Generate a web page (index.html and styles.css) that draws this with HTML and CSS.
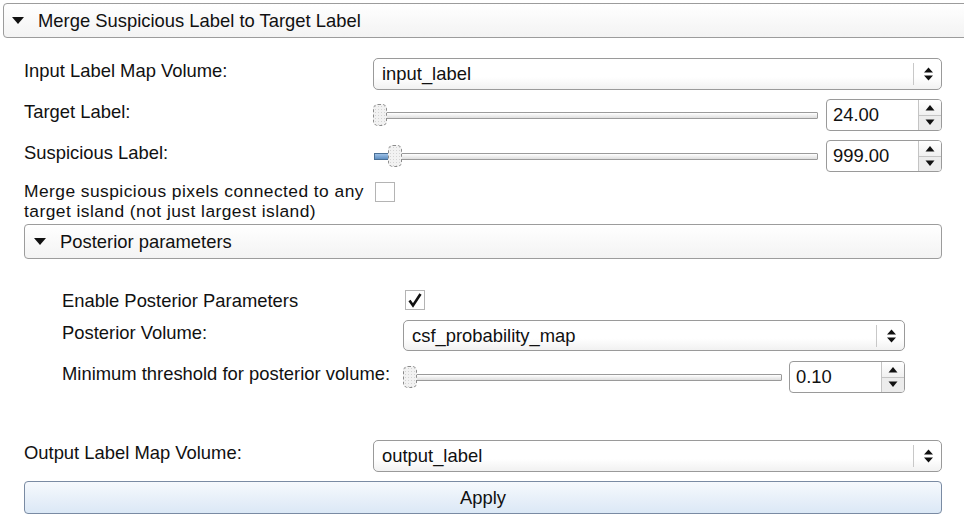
FILE: index.html
```html
<!DOCTYPE html>
<html lang="en">
<head>
  <meta charset="UTF-8" />
  <title>Merge Suspicious Label to Target Label</title>
  <link rel="stylesheet" href="styles.css">
</head>
<body>

<div class="collapsible top-header">
  <span class="arrow"></span>
  <span>Merge Suspicious Label to Target Label</span>
</div>

<div class="panel">
  <div class="row">
    <div class="field-label">Input Label Map Volume:</div>
    <div class="combo">
      <span class="combo-text">input_label</span>
      <span class="combo-sep"></span>
      <svg class="combo-arrows" width="11" height="16" viewBox="0 0 11 16"><path d="M1 6.5 L5.5 1.5 L10 6.5 Z M1 9.5 L5.5 14.5 L10 9.5 Z" fill="#111"/></svg>
    </div>
  </div>

  <div class="row">
    <div class="field-label">Target Label:</div>
    <div class="slider">
      <div class="groove"></div>
      <div class="handle" style="left: 0px"></div>
    </div>
    <div class="spin">
      <span class="spin-text">24.00</span>
      <div class="spin-btns">
        <div class="spin-up"><svg width="10" height="7" viewBox="0 0 10 7"><path d="M0.5 6.5 L5 1 L9.5 6.5 Z" fill="#111"/></svg></div>
        <div class="spin-down"><svg width="10" height="7" viewBox="0 0 10 7"><path d="M0.5 0.5 L5 6 L9.5 0.5 Z" fill="#111"/></svg></div>
      </div>
    </div>
  </div>

  <div class="row">
    <div class="field-label">Suspicious Label:</div>
    <div class="slider">
      <div class="groove"></div>
      <div class="fill" style="width: 18px"></div>
      <div class="handle" style="left: 15px"></div>
    </div>
    <div class="spin">
      <span class="spin-text">999.00</span>
      <div class="spin-btns">
        <div class="spin-up"><svg width="10" height="7" viewBox="0 0 10 7"><path d="M0.5 6.5 L5 1 L9.5 6.5 Z" fill="#111"/></svg></div>
        <div class="spin-down"><svg width="10" height="7" viewBox="0 0 10 7"><path d="M0.5 0.5 L5 6 L9.5 0.5 Z" fill="#111"/></svg></div>
      </div>
    </div>
  </div>

  <div class="row row-check">
    <div class="field-label two-line">Merge suspicious pixels connected to any<br>target island (not just largest island)</div>
    <div class="checkbox"></div>
  </div>

  <div class="collapsible sub-header">
    <span class="arrow"></span>
    <span>Posterior parameters</span>
  </div>

  <div class="sub-panel">
    <div class="row row-enable">
      <div class="field-label">Enable Posterior Parameters</div>
      <div class="checkbox checked">
        <svg width="16" height="16" viewBox="0 0 16 16"><path d="M2.5 8.5 L6 13.5 L13.5 2" fill="none" stroke="#111" stroke-width="2.6"/></svg>
      </div>
    </div>

    <div class="row row-short">
      <div class="field-label">Posterior Volume:</div>
      <div class="combo">
        <span class="combo-text">csf_probability_map</span>
        <span class="combo-sep"></span>
        <svg class="combo-arrows" width="11" height="16" viewBox="0 0 11 16"><path d="M1 6.5 L5.5 1.5 L10 6.5 Z M1 9.5 L5.5 14.5 L10 9.5 Z" fill="#111"/></svg>
      </div>
    </div>

    <div class="row">
      <div class="field-label">Minimum threshold for posterior volume:</div>
      <div class="slider">
        <div class="groove"></div>
        <div class="handle" style="left: 0px"></div>
      </div>
      <div class="spin">
        <span class="spin-text">0.10</span>
        <div class="spin-btns">
          <div class="spin-up"><svg width="10" height="7" viewBox="0 0 10 7"><path d="M0.5 6.5 L5 1 L9.5 6.5 Z" fill="#111"/></svg></div>
          <div class="spin-down"><svg width="10" height="7" viewBox="0 0 10 7"><path d="M0.5 0.5 L5 6 L9.5 0.5 Z" fill="#111"/></svg></div>
        </div>
      </div>
    </div>
  </div>

  <div class="row row-output">
    <div class="field-label">Output Label Map Volume:</div>
    <div class="combo">
      <span class="combo-text">output_label</span>
      <span class="combo-sep"></span>
      <svg class="combo-arrows" width="11" height="16" viewBox="0 0 11 16"><path d="M1 6.5 L5.5 1.5 L10 6.5 Z M1 9.5 L5.5 14.5 L10 9.5 Z" fill="#111"/></svg>
    </div>
  </div>

  <button class="apply-btn">Apply</button>
</div>

</body>
</html>
```

FILE: styles.css
```css
body {
  margin: 0;
  background: #fff;
  color: #111;
  font-family: "Liberation Sans", Arial, sans-serif;
  font-size: 18.4px;
  overflow: hidden;
}

/* collapsible section buttons */
.collapsible {
  display: flex;
  align-items: center;
  box-sizing: border-box;
  height: 35px;
  border: 1px solid #9c9c9c;
  border-radius: 4px;
  background: linear-gradient(#fff, #f3f3f3);
}
.collapsible .arrow {
  width: 0;
  height: 0;
  border-left: 6px solid transparent;
  border-right: 6px solid transparent;
  border-top: 7px solid #111;
  margin-right: 14px;
}
.top-header {
  margin: 3px -10px 0 3px;
  padding-left: 8px;
}
.sub-header {
  margin-top: 7px;
  padding-left: 9px;
}

.panel {
  width: 918px;
  margin-left: 24px;
  padding-top: 20px;
}

.row {
  display: flex;
  align-items: center;
  height: 32px;
  margin-bottom: 9px;
}
.field-label {
  flex: none;
  width: 349px;
  align-self: flex-start;
  padding-top: 2px;
  line-height: 21px;
  white-space: nowrap;
}
.two-line {
  padding-top: 0;
  font-size: 17.4px;
  line-height: 20px;
  letter-spacing: 0.45px;
}
.row-check {
  height: 36px;
  margin-bottom: 0;
  align-items: flex-start;
}
.row-check .checkbox {
  margin-top: 1px;
}

/* combo box */
.combo {
  flex: 1;
  display: flex;
  align-items: center;
  box-sizing: border-box;
  height: 32px;
  padding-left: 8px;
  border: 1px solid #9a9a9a;
  border-radius: 5px;
  background: linear-gradient(#fff 60%, #f1f1f1);
}
.combo-text {
  flex: 1;
}
.combo-sep {
  width: 1px;
  height: 22px;
  background: #c8c8c8;
  margin-right: 9px;
}
.combo-arrows {
  margin-right: 7px;
}

/* slider */
.slider {
  flex: 1;
  position: relative;
  height: 22px;
  margin-right: 8px;
}
.groove {
  position: absolute;
  left: 2px;
  right: 0;
  top: 8px;
  height: 5px;
  border: 1px solid #9a9a9a;
  border-radius: 1px;
  background: linear-gradient(#fff, #dedede);
}
.fill {
  position: absolute;
  left: 1px;
  top: 8px;
  height: 5px;
  border: 1px solid #4a6f95;
  background: linear-gradient(#9cc0e6, #5f8fc2);
}
.handle {
  position: absolute;
  top: 0;
  width: 12px;
  height: 20px;
  border: 1px dashed #8c8c8c;
  border-radius: 5px;
  background-color: #f2f2f2;
  background-image: radial-gradient(#d4d4d4 0.8px, transparent 1px);
  background-size: 3px 3px;
}

/* spin box */
.spin {
  flex: none;
  display: flex;
  box-sizing: border-box;
  width: 116px;
  height: 32px;
  border: 1px solid #9a9a9a;
  border-radius: 4px;
  background: #fff;
  overflow: hidden;
}
.spin-text {
  flex: 1;
  padding-left: 6px;
  line-height: 30px;
}
.spin-btns {
  width: 22px;
  display: flex;
  flex-direction: column;
  border-left: 1px solid #c4c4c4;
}
.spin-up, .spin-down {
  flex: 1;
  display: flex;
  align-items: center;
  justify-content: center;
}
.spin-up {
  background: linear-gradient(#fff, #f0f0f0);
  border-bottom: 1px solid #c4c4c4;
}
.spin-down {
  background: #ececec;
}

/* check box */
.checkbox {
  flex: none;
  box-sizing: border-box;
  width: 20px;
  height: 20px;
  margin-left: 2px;
  border: 1px solid #b4b4b4;
  background: #fff;
  display: flex;
  align-items: center;
  justify-content: center;
}

/* posterior group */
.sub-panel {
  padding-left: 38px;
  padding-right: 37px;
  padding-top: 29px;
}
.sub-panel .field-label {
  width: 341px;
}
.row-enable {
  height: 24px;
  margin-bottom: 8px;
}
.row-enable .field-label {
  padding-top: 2px;
}
.row-enable .checkbox {
  margin-left: 2px;
}
.row-short {
  height: 31px;
  margin-bottom: 10px;
}
.row-short .combo {
  height: 31px;
}
.sub-panel .slider {
  margin-left: 0;
  margin-right: 7px;
}

.row-output {
  margin-top: 47px;
}

.apply-btn {
  display: block;
  width: 100%;
  height: 33px;
  padding: 0;
  border: 1px solid #7a8ba3;
  border-radius: 4px;
  background: linear-gradient(#f6f9fd, #dbe8f6);
  font-family: inherit;
  font-size: 18.4px;
  color: #111;
}
```
